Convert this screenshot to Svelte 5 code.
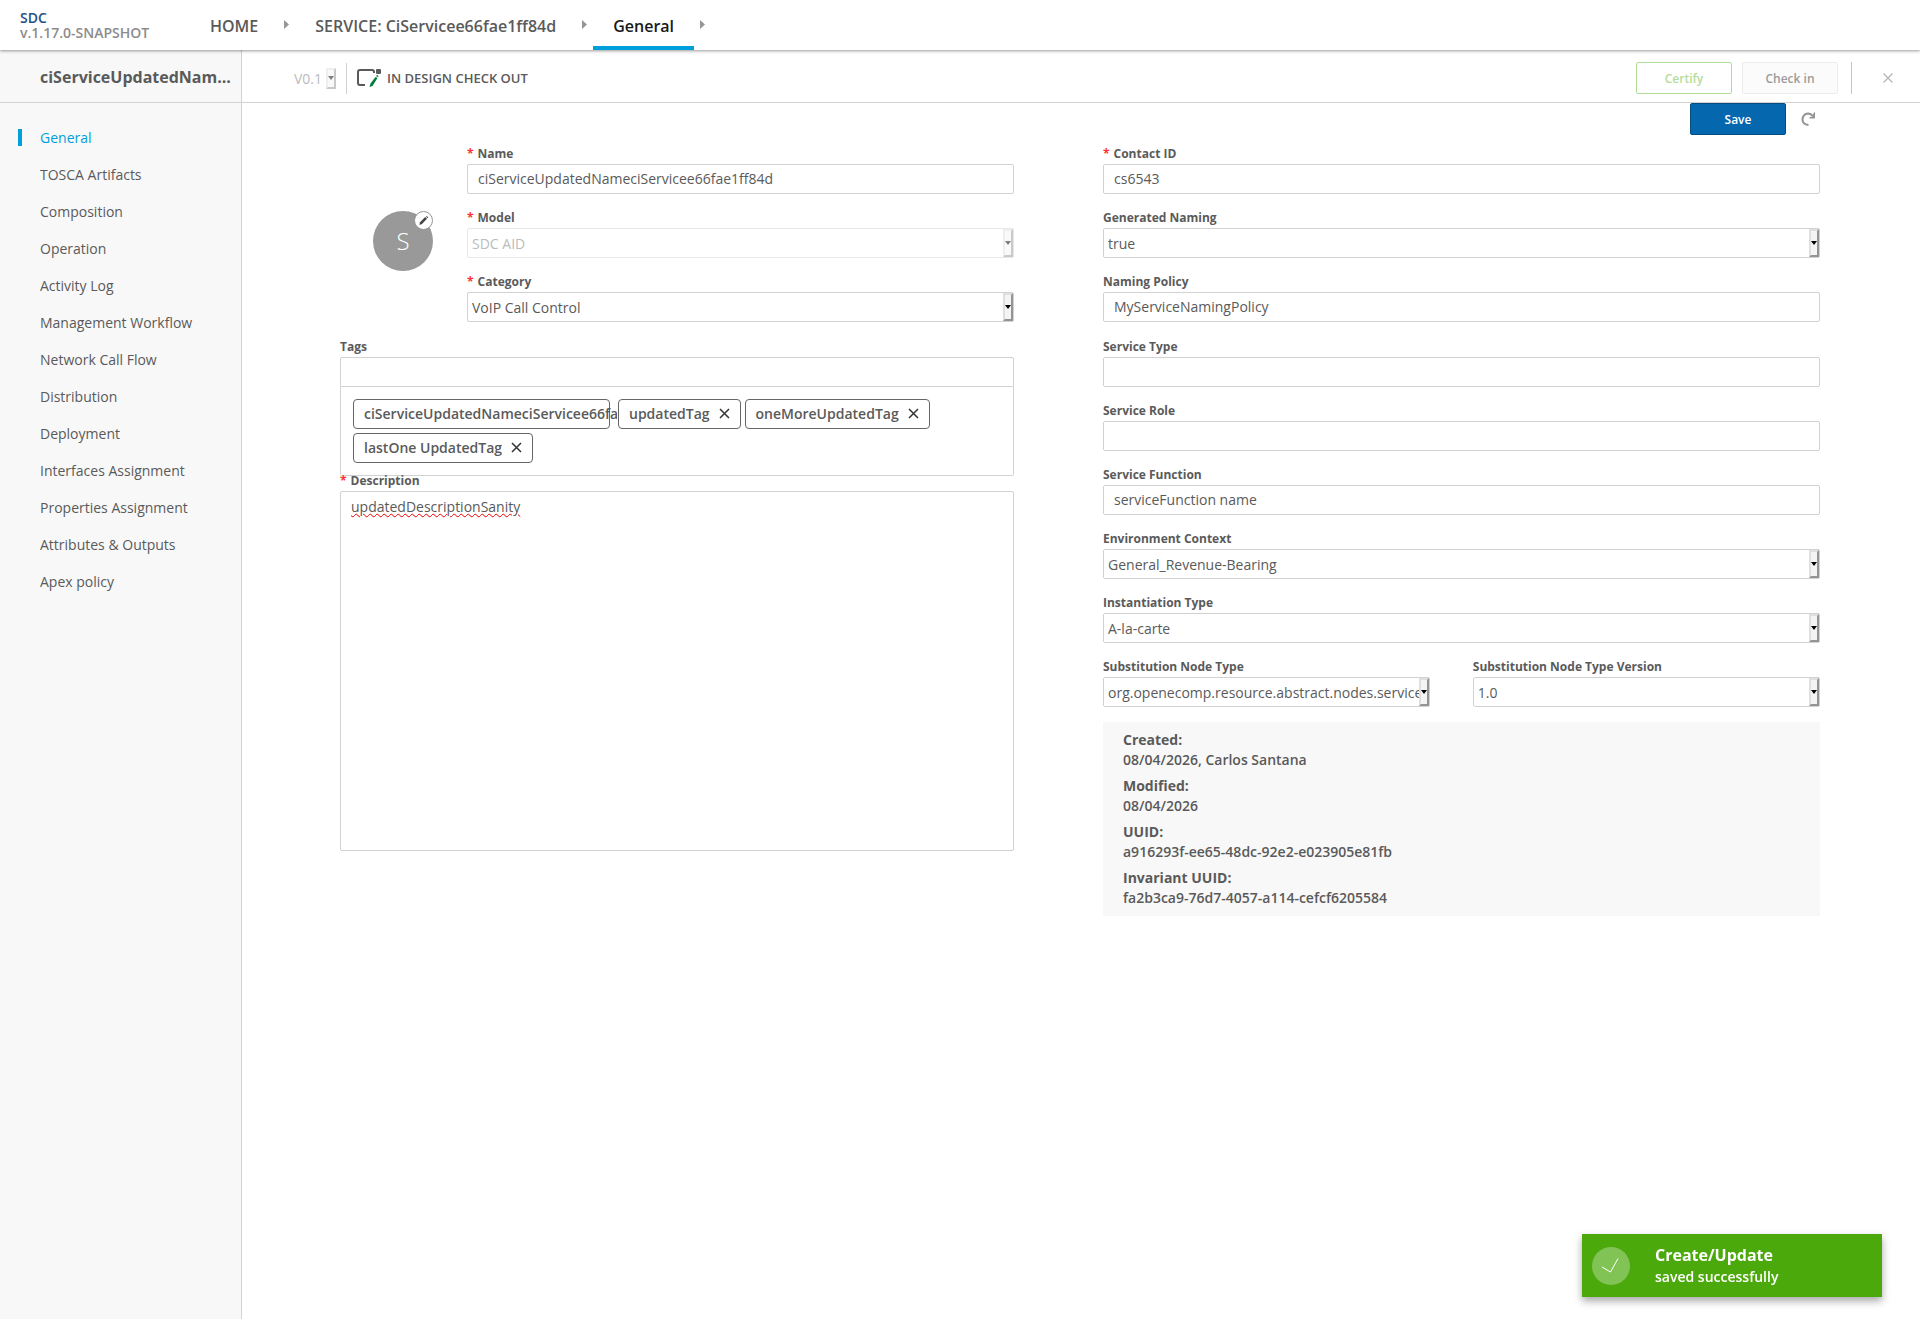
<script>
    const menuItems = [
        "General",
        "TOSCA Artifacts",
        "Composition",
        "Operation",
        "Activity Log",
        "Management Workflow",
        "Network Call Flow",
        "Distribution",
        "Deployment",
        "Interfaces Assignment",
        "Properties Assignment",
        "Attributes & Outputs",
        "Apex policy",
    ];
    let selectedItem = $state("General");

    const crumbs = ["HOME", "SERVICE: CiServicee66fae1ff84d", "General"];

    let description = $state("updatedDescriptionSanity");
    let tags = $state([
        "ciServiceUpdatedNameciServicee66fae1ff84d",
        "updatedTag",
        "oneMoreUpdatedTag",
        "lastOne UpdatedTag",
    ]);

    const details = [
        { label: "Created:", value: "08/04/2026, Carlos Santana" },
        { label: "Modified:", value: "08/04/2026" },
        { label: "UUID:", value: "a916293f-ee65-48dc-92e2-e023905e81fb" },
        { label: "Invariant UUID:", value: "fa2b3ca9-76d7-4057-a114-cefcf6205584" },
    ];

    const removeTag = (tag) => {
        tags = tags.filter((t) => t !== tag);
    }
</script>

{#snippet textField(id, label, value, required)}
    <div class="field">
        <label for={id}>{#if required}<span class="required">*</span>{/if}{label}</label>
        <input {id} type="text" {value}>
    </div>
{/snippet}

{#snippet selectField(id, label, value, required, disabled)}
    <div class="field">
        <label for={id}>{#if required}<span class="required">*</span>{/if}{label}</label>
        <div class="select" class:disabled>
            <select {id} {disabled}>
                <option>{value}</option>
            </select>
            <span class="arrow"></span>
        </div>
    </div>
{/snippet}

<div class="page">
    <header class="top-nav">
        <div class="logo">
            <a href="#home">SDC</a>
            <span>v.1.17.0-SNAPSHOT</span>
        </div>
        <nav class="crumbs">
            {#each crumbs as crumb, index}
                <a href="#crumb" class:active={index === crumbs.length - 1}>{crumb}</a>
                <svg width="5" height="9" viewBox="0 0 5 9"><path d="M0 0L5 4.5L0 9Z" fill="#959595" /></svg>
            {/each}
        </nav>
    </header>

    <div class="workspace">
        <aside class="sidebar">
            <h1>ciServiceUpdatedNam...</h1>
            <ul>
                {#each menuItems as item}
                    <li class:active={selectedItem === item}>
                        <button onclick={() => selectedItem = item}>{item}</button>
                    </li>
                {/each}
            </ul>
        </aside>

        <main>
            <div class="toolbar">
                <div class="version select disabled">
                    <select aria-label="Version" disabled>
                        <option>V0.1</option>
                    </select>
                    <span class="arrow"></span>
                </div>
                <div class="state">
                    <svg width="25" height="18" viewBox="0 0 25 18">
                        <path d="M8 16H3Q1 16 1 14V3Q1 1 3 1H15Q17 1 17 3V4" fill="none" stroke="#5a5a5a" stroke-width="2" />
                        <rect x="19" y="0" width="5" height="5" rx="1" fill="#5a5a5a" />
                        <path d="M18.500 8L20.500 9L15.500 17L12.500 18L13.500 14.500Z" fill="#007a3e" />
                        <path d="M19 7L20 6L21.500 7L21 8.200Z" fill="#007a3e" />
                    </svg>
                    <span>IN DESIGN CHECK OUT</span>
                </div>
                <div class="actions">
                    <button class="btn certify">Certify</button>
                    <button class="btn checkin">Check in</button>
                    <button class="close" aria-label="Close">
                        <svg width="10" height="10" viewBox="0 0 10 10"><path d="M0.500 0.500L9.500 9.500M9.500 0.500L0.500 9.500" stroke="#b5b5b5" stroke-width="1.300" /></svg>
                    </button>
                </div>
            </div>

            <div class="save-row">
                <button class="btn save">Save</button>
                <button class="refresh" aria-label="Revert">
                    <svg width="15" height="15" viewBox="0 0 15 15">
                        <path d="M7.500 13Q1.500 12.500 1.500 7.500Q2 1.800 7 1.500Q10 1.500 12 4.500" fill="none" stroke="#959595" stroke-width="2" />
                        <path d="M14 0V6.500H8.500V5H11.500L12.500 1Z" fill="#959595" />
                    </svg>
                </button>
            </div>

            <form class="form" onsubmit={(e) => e.preventDefault()}>
                <div class="column">
                    <div class="identity">
                        <div class="avatar">
                            S
                            <button type="button" aria-label="Edit icon">
                                <svg width="11" height="11" viewBox="0 0 11 11">
                                    <path d="M7.200 2L9 3.700L4 9L1.500 10L2 7.300Z" fill="#444" />
                                    <path d="M8 1.500L8.800 1L10.200 2.300L9.500 3.200Z" fill="#444" />
                                </svg>
                            </button>
                        </div>
                        <div class="fields">
                            {@render textField("name", "Name", "ciServiceUpdatedNameciServicee66fae1ff84d", true)}
                            {@render selectField("model", "Model", "SDC AID", true, true)}
                            {@render selectField("category", "Category", "VoIP Call Control", true, false)}
                        </div>
                    </div>

                    <div class="field tags-field">
                        <label for="tags">Tags</label>
                        <input id="tags" type="text">
                        <ul class="tags">
                            {#each tags as tag}
                                <li class:long={tag.length > 30}>
                                    <span>{tag}</span>
                                    <button type="button" aria-label="Remove {tag}" onclick={() => removeTag(tag)}>
                                        <svg width="11" height="11" viewBox="0 0 11 11"><path d="M1 1L10 10M10 1L1 10" stroke="#333" stroke-width="1.500" /></svg>
                                    </button>
                                </li>
                            {/each}
                        </ul>
                    </div>

                    <div class="field">
                        <label for="description"><span class="required">*</span>Description</label>
                        <textarea id="description" spellcheck="false" bind:value={description}></textarea>
                    </div>
                </div>

                <div class="column">
                    <div class="fields">
                        {@render textField("contact", "Contact ID", "cs6543", true)}
                        {@render selectField("generated", "Generated Naming", "true", false, false)}
                        {@render textField("policy", "Naming Policy", "MyServiceNamingPolicy", false)}
                    </div>
                    <div class="fields service">
                        {@render textField("type", "Service Type", "", false)}
                        {@render textField("role", "Service Role", "", false)}
                        {@render textField("function", "Service Function", "serviceFunction name", false)}
                        {@render selectField("context", "Environment Context", "General_Revenue-Bearing", false, false)}
                        {@render selectField("instantiation", "Instantiation Type", "A-la-carte", false, false)}
                        <div class="pair">
                            {@render selectField("node", "Substitution Node Type", "org.openecomp.resource.abstract.nodes.service", false, false)}
                            {@render selectField("node-version", "Substitution Node Type Version", "1.0", false, false)}
                        </div>
                    </div>
                    <dl class="details">
                        {#each details as item}
                            <div>
                                <dt>{item.label}</dt>
                                <dd>{item.value}</dd>
                            </div>
                        {/each}
                    </dl>
                </div>
            </form>
        </main>
    </div>

    <div class="toast" role="status">
        <svg width="38" height="38" viewBox="0 0 38 38">
            <circle cx="19" cy="19" r="19" fill="#fff" fill-opacity="0.300" />
            <path d="M10 20L18.500 25L26 11.500" fill="none" stroke="#fff" stroke-width="1" />
        </svg>
        <div>
            <strong>Create/Update</strong>
            <span>saved successfully</span>
        </div>
    </div>
</div>

<style>
    :global(body) {
        background: #fff;
    }

    .page {
        --grey: #5a5a5a;
        --border: #d2d2d2;
        --blue: #009fdb;
        display: flex;
        flex-direction: column;
        min-height: 100vh;
        font-family: "Open Sans", sans-serif;
        font-size: 14px;
        color: var(--grey);
    }

    .page * {
        box-sizing: border-box;
    }

    button, input, select, textarea {
        font: inherit;
        color: inherit;
        margin: 0;
    }

    button {
        cursor: pointer;
        padding: 0;
        border: none;
        background: none;
    }

    ul, dl, dd, h1 {
        margin: 0;
        padding: 0;
        list-style: none;
    }

    svg {
        display: block;
        flex: none;
    }

    .top-nav {
        position: relative;
        z-index: 1;
        display: flex;
        height: 50px;
        padding-left: 20px;
        background: #fff;
        box-shadow: 0 1px 3px rgba(0, 0, 0, 0.4);
    }

    .logo {
        display: flex;
        flex-direction: column;
        justify-content: center;
        width: 190px;
        font-size: 14px;
        font-weight: 600;
        line-height: 15px;
        color: #8c8c8c;
    }

    .logo a {
        color: #1f4e85;
        text-decoration: none;
    }

    .crumbs {
        display: flex;
        font-size: 16px;
    }

    .crumbs a {
        padding: 0 20px;
        margin-left: 6px;
        line-height: 52px;
        font-weight: 600;
        color: var(--grey);
        text-decoration: none;
    }

    .crumbs a:first-child {
        padding-left: 0;
        margin-left: 0;
    }

    .crumbs a.active {
        height: 50px;
        color: #191919;
        border-bottom: 4px solid var(--blue);
    }

    .crumbs svg {
        margin: 20px 0 0 6px;
    }

    .workspace {
        display: flex;
        flex: 1;
    }

    .sidebar {
        width: 242px;
        background: #f8f8f8;
        border-right: 1px solid var(--border);
    }

    .sidebar h1 {
        height: 53px;
        padding-left: 40px;
        font-size: 16px;
        font-weight: 700;
        line-height: 54px;
        border-bottom: 1px solid var(--border);
    }

    .sidebar ul {
        padding-top: 16px;
    }

    .sidebar li {
        display: flex;
        align-items: center;
        height: 37px;
        padding-left: 40px;
    }

    .sidebar li.active {
        padding-left: 18px;
        color: var(--blue);
    }

    .sidebar li.active::before {
        content: "";
        width: 4px;
        height: 17px;
        margin-right: 18px;
        background: var(--blue);
    }

    main {
        flex: 1;
        min-width: 0;
    }

    .toolbar {
        display: flex;
        align-items: center;
        height: 53px;
        padding: 4px 27px 0 48px;
        border-bottom: 1px solid var(--border);
    }

    .state {
        display: flex;
        align-items: center;
        gap: 5px;
        height: 31px;
        margin-left: 9px;
        padding-left: 10px;
        border-left: 1px solid var(--border);
        font-size: 13px;
        font-weight: 600;
    }

    .actions {
        display: flex;
        align-items: center;
        gap: 10px;
        margin-left: auto;
    }

    .btn {
        width: 96px;
        height: 32px;
        border: 1px solid;
        border-radius: 2px;
        font-size: 12px;
        font-weight: 600;
    }

    .certify {
        color: #b4dd9c;
        border-color: #b1dd9a;
    }

    .checkin {
        color: #9b9b9b;
        background: #fbfbfb;
        border-color: #ececec;
    }

    .close {
        height: 32px;
        margin-left: 3px;
        padding-left: 31px;
        border-left: 1px solid #c4c4c4;
    }

    .save-row {
        display: flex;
        justify-content: flex-end;
        align-items: center;
        gap: 15px;
        height: 32px;
        padding-right: 104px;
    }

    .save {
        color: #fff;
        background: #0568ae;
        border-color: #044d81;
    }

    .form {
        display: grid;
        grid-template-columns: 674fr 717fr;
        gap: 89px;
        padding: 14px 100px 40px 98px;
    }

    .column {
        min-width: 0;
    }

    .identity {
        display: flex;
        gap: 34px;
        padding-left: 33px;
    }

    .identity .fields {
        flex: 1;
    }

    .avatar {
        position: relative;
        flex: none;
        width: 60px;
        height: 60px;
        margin-top: 62px;
        border-radius: 50%;
        background: #999;
        color: #fff;
        font-size: 24px;
        font-weight: 300;
        line-height: 60px;
        text-align: center;
    }

    .avatar button {
        position: absolute;
        top: 0;
        right: 0;
        display: flex;
        align-items: center;
        justify-content: center;
        width: 19px;
        height: 19px;
        border: 1px solid #959595;
        border-radius: 50%;
        background: #fff;
    }

    .fields {
        display: flex;
        flex-direction: column;
        gap: 19px;
    }

    .service, .tags-field {
        margin-top: 20px;
    }

    .field {
        min-width: 0;
    }

    .field label {
        display: block;
        margin-bottom: 5px;
        font-size: 12px;
        font-weight: 700;
        line-height: 10px;
    }

    .required {
        margin-right: 4px;
        color: #f33;
    }

    .field input, .field select, .field textarea {
        display: block;
        width: 100%;
        height: 30px;
        padding: 0 10px 2px;
        border: 1px solid var(--border);
        border-radius: 2px;
        background: #fff;
        outline: none;
    }

    .select {
        position: relative;
    }

    .select select, .field .select select {
        appearance: none;
        padding: 0 10px 0 4px;
        opacity: 1;
    }

    .select.disabled select {
        color: #bbb;
        border-color: #e8e8e8;
    }

    .arrow {
        position: absolute;
        top: 1px;
        right: 1px;
        bottom: 1px;
        display: flex;
        align-items: center;
        justify-content: center;
        width: 10px;
        border: 2px solid;
        border-color: #dfdfdf #949494 #949494 #dfdfdf;
        background: #f4f4f4;
        pointer-events: none;
    }

    .arrow::after {
        content: "";
        border: 3px solid transparent;
        border-top: 4px solid #000;
        border-bottom: none;
    }

    .disabled .arrow {
        opacity: 0.5;
    }

    .version select {
        display: block;
        width: 47px;
        height: 23px;
        border: none;
        background: none;
    }

    .tags-field input {
        border-radius: 2px 2px 0 0;
    }

    .tags {
        display: flex;
        flex-wrap: wrap;
        gap: 4px;
        padding: 12px;
        border: 1px solid var(--border);
        border-top: none;
        border-radius: 0 0 2px 2px;
    }

    .tags li {
        display: flex;
        align-items: center;
        gap: 9px;
        height: 30px;
        padding: 0 10px 1px;
        border: 1px solid #666;
        border-radius: 4px;
        font-weight: 600;
        white-space: nowrap;
    }

    /* long tags run past their border and stop before the next one */
    .tags li.long {
        max-width: 257px;
        margin-right: 4px;
        overflow: clip;
        overflow-clip-margin: 8px;
    }

    .field textarea {
        height: 360px;
        padding: 5px 10px;
        line-height: 20px;
        resize: none;
        text-decoration: underline wavy #e00 1px;
    }

    .pair {
        display: grid;
        grid-template-columns: 16fr 17fr;
        gap: 43px;
    }

    .details {
        display: flex;
        flex-direction: column;
        gap: 6px;
        margin-top: 15px;
        padding: 8px 20px;
        background: #f8f8f8;
        font-weight: 600;
        line-height: 20px;
    }

    .details dt {
        font-weight: 700;
    }

    .toast {
        position: fixed;
        right: 38px;
        bottom: 22px;
        display: flex;
        align-items: center;
        gap: 25px;
        width: 300px;
        height: 63px;
        padding: 0 10px;
        background: #4ca90c;
        color: #fff;
        box-shadow: 0 4px 8px rgba(0, 0, 0, 0.35);
        font-weight: 600;
    }

    .toast strong, .toast span {
        display: block;
        line-height: 21px;
    }

    .toast strong {
        font-size: 16px;
        font-weight: 700;
    }
</style>
